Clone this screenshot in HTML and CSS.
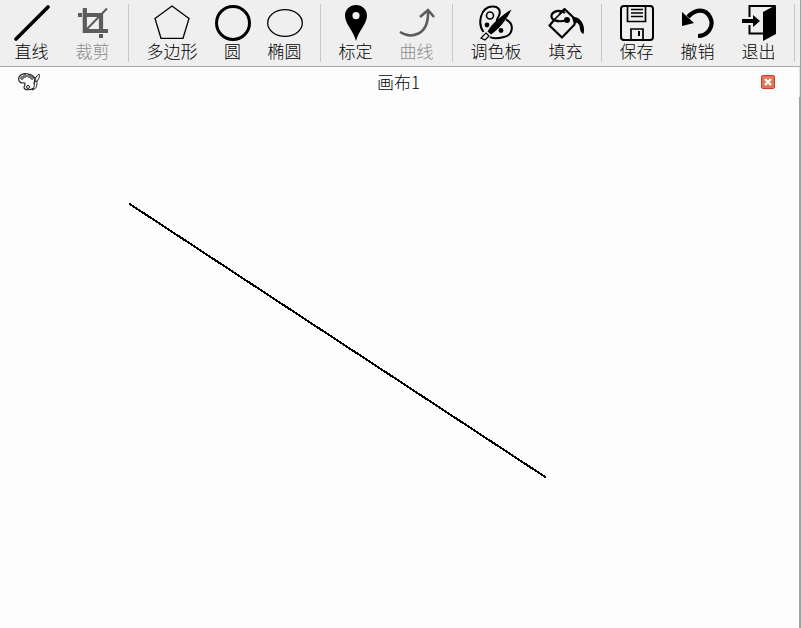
FILE: index.html
```html
<!DOCTYPE html>
<html lang="zh-CN">
<head>
<meta charset="utf-8">
<title>画布1</title>
<link rel="stylesheet" href="styles.css">
</head>
<body>
<div class="toolbar" role="toolbar">
  <button class="tool" type="button"><svg viewBox="0 0 36 36"><path d="M2 34L34 2" fill="none" stroke="#000" stroke-width="3.6" stroke-linecap="round"/></svg>直线</button>
  <button class="tool" type="button" disabled><svg viewBox="0 0 36 36"><path d="M3 8h4v4H3zM24 29h4v4h-4z" fill="#5c5c5c"/><path d="M9.800 3V26H33M8 10H26V28" fill="none" stroke="#5c5c5c" stroke-width="4.200"/><path d="M11 25L32 3.500" stroke="#5c5c5c" stroke-width="2"/></svg>裁剪</button>
  <span class="separator"></span>
  <button class="tool wide" type="button"><svg viewBox="0 0 36 36"><path d="M18 1L35 13.500 29 33.300H7L1 13.500z" fill="none" stroke="#000" stroke-width="1.300"/></svg>多边形</button>
  <button class="tool narrow" type="button"><svg viewBox="0 0 36 36"><circle cx="18" cy="18" r="16.500" fill="none" stroke="#000" stroke-width="3"/></svg>圆</button>
  <button class="tool" type="button"><svg viewBox="0 0 36 36"><ellipse cx="18" cy="18" rx="17.300" ry="13.300" fill="none" stroke="#000" stroke-width="1.300"/></svg>椭圆</button>
  <span class="separator"></span>
  <button class="tool" type="button"><svg viewBox="0 0 36 36"><path fill-rule="evenodd" d="M18 0C12 0 7 4.500 7 10.500 7 19 15 25 18 36 21 25 29 19 29 10.500 29 4.500 24 0 18 0zM18 7a3.600 3.600 0 1 1 0 7.200 3.600 3.600 0 0 1 0-7.200z"/></svg>标定</button>
  <button class="tool" type="button" disabled><svg viewBox="0 0 36 36"><path d="M1 27C12 34 30 31 29 6M21 12L29 5 35 12" fill="none" stroke="#5c5c5c" stroke-width="2.600"/></svg>曲线</button>
  <span class="separator"></span>
  <button class="tool wide" type="button"><svg viewBox="0 0 36 36"><path d="M5.500 27C-1 18 3 2 14 1.500 21 1 23 6 21 10.500 20 13 18 15 19 16M28 14.500C37 19 35 30 26 32 20 33.500 15 34 12 32" fill="none" stroke="#000" stroke-width="2"/><circle cx="12" cy="10.500" r="3.500" fill="none" stroke="#000" stroke-width="1.600"/><circle cx="9" cy="20" r="2.400"/><circle cx="23" cy="25.500" r="2.400"/><path d="M33.500 4.500C27 8 14 18 9.500 26.500L13 29.500C21 24 29 14 33.500 4.500z"/><path d="M8 28L11 31 7 35 3 33z" fill="#efefef" stroke="#000" stroke-width="1.200"/></svg>调色板</button>
  <button class="tool" type="button"><svg viewBox="0 0 36 36"><path d="M7 14L1.500 20.500 14 32.500 27 19M11.500 9L16.500 4 27 14" fill="none" stroke="#000" stroke-width="2.200" stroke-linejoin="round"/><path d="M17 8C14 5 7 5 4 9 1 15 10 18 19 15" fill="none" stroke="#000" stroke-width="2.200"/><path d="M7 14L16 5" stroke="#000" stroke-width="1.600"/><circle cx="19" cy="15" r="3"/><path d="M24 12C31 11 38 18 35.500 29 33 28 32 26 31.500 20.500L29 17.500 26 20z"/></svg>填充</button>
  <span class="separator"></span>
  <button class="tool" type="button"><svg viewBox="0 0 36 36"><rect x="2" y="1" width="32" height="34" rx="3" fill="none" stroke="#000" stroke-width="2"/><path d="M8.500 1V16.500H26.500V1M12 35V24H24V35M12 4.500h12M12 8h12M12 11.500h12" fill="none" stroke="#000" stroke-width="1.700"/><path d="M20 26V31" stroke="#000" stroke-width="2"/></svg>保存</button>
  <button class="tool" type="button"><svg viewBox="0 0 36 36"><path d="M8 12C15 4 25 3 30 12 35 22 27 31 18 31" fill="none" stroke="#000" stroke-width="4.200"/><path d="M2 7V21L14 18z"/></svg>撤销</button>
  <button class="tool" type="button"><svg viewBox="0 0 36 36"><path d="M22 7L35 0V29L22 36z"/><path d="M8.500 12V1H34M8.500 20V28.500H22" fill="none" stroke="#000" stroke-width="2"/><path d="M1 14h11V10l7 6-7 6v-4H1z"/></svg>退出</button>
  <span class="separator"></span>
</div>
<main class="window">
  <header class="titlebar">
    <svg class="palette" viewBox="0 0 24 20"><path d="M6 11C2 11 1 8 2 5 5 0 14 1 18 6M6 11C9 10 8 13 7 15 7 19 14 18 17 16" fill="none" stroke="#222" stroke-width="1.200"/><g fill="none" stroke="#222"><circle cx="5" cy="6" r="1.300"/><circle cx="8" cy="4" r="1.300"/><circle cx="12" cy="4" r="1.300"/><circle cx="15" cy="6" r="1.300"/><circle cx="11" cy="15" r="1.500"/><path d="M22 2C19 4 18 7 18 10L21 8C22 6 23 4 22 2zM18 9C16 12 19 14 15 18 20 17 20 13 20 9M18 5L17 12"/></g></svg>
    <h1 class="title">画布1</h1>
    <button class="close" type="button" aria-label="关闭"><svg viewBox="0 0 12 12"><path d="M3 3L9 9M9 3L3 9" stroke="#fff" stroke-width="2.400"/></svg></button>
  </header>
  <div class="canvas">
    <svg class="drawing" viewBox="0 0 799 531"><path d="M129 106.500L546 380.500" stroke="#000" stroke-width="2" shape-rendering="crispEdges"/></svg>
  </div>
</main>
</body>
</html>
```
FILE: styles.css
```css
* {
  box-sizing: border-box;
}

body {
  margin: 0;
  min-height: 100vh;
  display: flex;
  flex-direction: column;
  border-right: 1px solid #a0a0a0;
  background: #fdfdfd;
  color: #000;
  font: 300 17px/20px "Noto Sans CJK SC", sans-serif;
}

.toolbar {
  display: flex;
  padding: 4px 0 4px 1px;
  border-bottom: 1px solid #aaa;
  background: #efefef;
}

.tool {
  display: flex;
  flex: none;
  flex-direction: column;
  align-items: center;
  width: 61px;
  padding: 1px 0 0;
  border: 0;
  background: none;
  color: inherit;
  font: inherit;
  white-space: nowrap;
}

.tool.wide {
  width: 78px;
}

.tool.narrow {
  width: 43px;
}

.tool:disabled {
  color: #8c8c8c;
}

.tool svg {
  width: 36px;
  height: 36px;
}

.separator {
  flex: none;
  width: 1px;
  height: 58px;
  margin: 0 4px 0 5px;
  background: #c8c8c8;
}

.window {
  display: flex;
  flex: 1;
  flex-direction: column;
}

.titlebar {
  display: grid;
  grid-template-columns: 24px 1fr 24px;
  align-items: center;
  height: 30px;
  padding: 0 19px 0 17px;
  border-right: 1px solid #e3e3e3;
}

.palette {
  width: 24px;
  height: 20px;
}

.title {
  margin: 0;
  font: inherit;
  text-align: center;
}

.close {
  justify-self: center;
  width: 14px;
  height: 14px;
  padding: 0;
  border: 1px solid #d63a26;
  border-radius: 2px;
  background: #df7856;
}

.close svg {
  display: block;
  width: 12px;
  height: 12px;
}

.canvas {
  flex: 1;
  border-right: 1px solid #a0a0a0;
}

.drawing {
  display: block;
  width: 100%;
}
```
